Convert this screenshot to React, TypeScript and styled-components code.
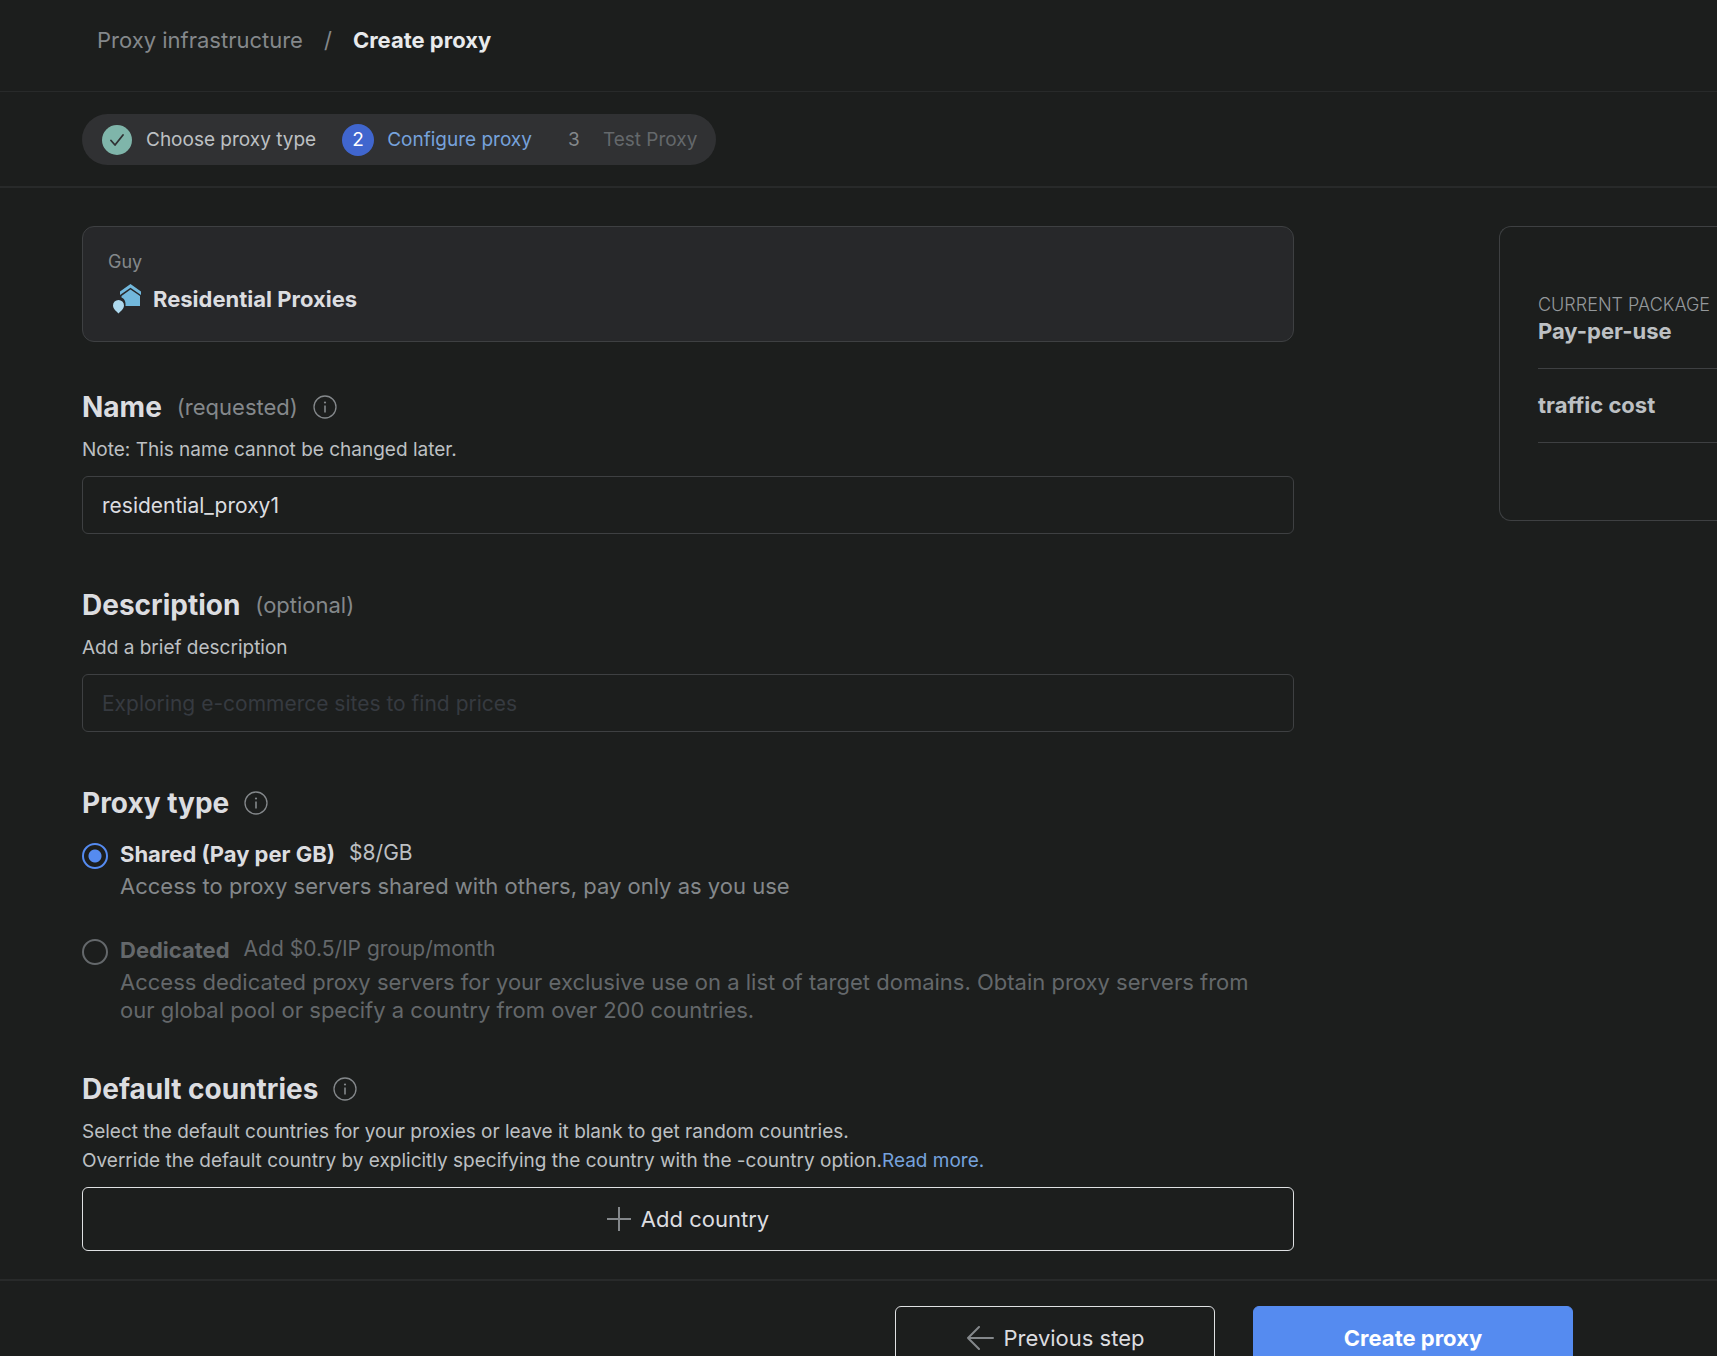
import React, { useState } from "react";
import styled, { createGlobalStyle } from "styled-components";

const color = {
  bg: "#1c1e1d",
  panel: "#27282a",
  pill: "#303133",
  divider: "#282a2a",
  border: "#3e4042",
  heading: "#dcdde0",
  text: "#bdc0c3",
  muted: "#84888b",
  dim: "#64686b",
  link: "#76a2dc",
  primary: "#558bf0",
};

const GlobalStyle = createGlobalStyle`
  *, *::before, *::after { box-sizing: border-box; }
  body {
    margin: 0;
    background: ${color.bg};
    color: ${color.text};
    font-family: Inter, "Liberation Sans", sans-serif;
    overflow-x: hidden;
  }
  h1, h2, p, ol, ul, fieldset { margin: 0; padding: 0; border: 0; }
  button, input { font-family: inherit; }
`;

const Header = styled.header`
  padding: 26px 97px 37px;
  border-bottom: 1px solid ${color.divider};
`;

const Crumbs = styled.nav`
  display: flex;
  gap: 21px;
  font-size: 22px;
  line-height: 28px;
  color: ${color.muted};
`;

const CrumbLink = styled.a`
  color: inherit;
  text-decoration: none;
`;

const CrumbCurrent = styled.span`
  font-weight: 700;
  color: #e8eaec;
`;

const StepsBar = styled.div`
  display: flex;
  padding: 22px 82px 21px;
  border-bottom: 2px solid ${color.divider};
`;

const Steps = styled.ol`
  display: flex;
  align-items: center;
  height: 51px;
  padding: 0 19px;
  gap: 26px;
  border-radius: 26px;
  background: ${color.pill};
  list-style: none;
`;

type StepState = "done" | "active" | "todo";

const stepText = { done: color.text, active: color.link, todo: color.dim };
const badgeBg = { done: "#7fb5aa", active: "#4066ce", todo: "transparent" };
const badgeText = { done: color.pill, active: "#ffffff", todo: color.muted };

const Step = styled.li<{ $state: StepState }>`
  display: flex;
  align-items: center;
  gap: 13px;
  font-size: 19px;
  line-height: 28px;
  color: ${(p) => stepText[p.$state]};
`;

const StepBadge = styled.span<{ $state: StepState }>`
  display: flex;
  align-items: center;
  justify-content: center;
  width: 32px;
  height: 32px;
  border: ${(p) => (p.$state === "done" ? 1 : 0)}px solid transparent;
  border-radius: 50%;
  background: ${(p) => badgeBg[p.$state]};
  background-clip: padding-box;
  color: ${(p) => badgeText[p.$state]};
`;

const Main = styled.main`
  display: flex;
  align-items: flex-start;
  gap: 205px;
  padding: 38px 0 28px 82px;
`;

const Form = styled.form`
  flex: 1;
  min-width: 0;
`;

const ProductCard = styled.section`
  height: 116px;
  padding: 21px 25px;
  border: 1px solid ${color.border};
  border-radius: 12px;
  background: ${color.panel};
`;

const ProductOwner = styled.p`
  font-size: 18px;
  line-height: 28px;
  color: ${color.muted};
`;

const ProductName = styled.h1`
  display: flex;
  align-items: center;
  gap: 12px;
  padding-top: 7px;
  font-size: 22px;
  font-weight: 700;
  line-height: 32px;
  color: ${color.heading};
`;

const HouseSvg = styled.svg`
  margin-left: 5px;
`;

const Section = styled.section<{ $gap?: number }>`
  padding-top: ${(p) => p.$gap ?? 53}px;
`;

const HeadingRow = styled.div`
  display: flex;
  align-items: center;
  gap: 15px;
`;

const Heading = styled.h2`
  font-size: 28px;
  font-weight: 700;
  line-height: 36px;
  color: ${color.heading};
`;

const Hint = styled.span`
  font-size: 22px;
  line-height: 36px;
  color: ${color.muted};
`;

const InfoButton = styled.button`
  display: flex;
  padding: 0;
  border: 0;
  background: none;
  color: ${color.muted};
`;

const Note = styled.p`
  padding: 10px 0 12px;
  font-size: 19px;
  line-height: 29px;
`;

const NoteLink = styled.a`
  color: ${color.link};
  text-decoration: none;
`;

const TextInput = styled.input`
  display: block;
  width: 100%;
  height: 58px;
  padding: 0 19px;
  border: 1px solid ${color.border};
  border-radius: 6px;
  outline: none;
  background: transparent;
  font-size: 21px;
  color: ${color.heading};
  &::placeholder {
    color: #363a40;
    opacity: 1;
  }
`;

const Options = styled.fieldset`
  display: grid;
  gap: 36px;
  padding-top: 19px;
`;

const Option = styled.label<{ $dim?: boolean }>`
  display: grid;
  grid-template-columns: 26px 1fr;
  column-gap: 12px;
  row-gap: 3px;
  font-size: 22px;
  line-height: 28px;
  color: ${(p) => (p.$dim ? color.dim : color.muted)};
`;

const Radio = styled.input`
  appearance: none;
  width: 26px;
  height: 26px;
  margin: 3px 0 0;
  border: 2px solid ${color.dim};
  border-radius: 50%;
  &:checked {
    border-color: ${color.primary};
    background: radial-gradient(circle, ${color.primary} 6px, transparent 7px);
  }
`;

const OptionTitle = styled.span`
  display: flex;
  gap: 14px;
`;

const OptionName = styled.strong<{ $dim?: boolean }>`
  font-weight: 700;
  color: ${(p) => (p.$dim ? color.dim : color.heading)};
`;

const OptionPrice = styled.span<{ $dim?: boolean }>`
  font-size: 21px;
  line-height: 26px;
  color: ${(p) => (p.$dim ? color.dim : color.text)};
`;

const OptionText = styled.span`
  grid-column: 2;
  padding-right: 24px;
`;

const Button = styled.button<{ $primary?: boolean; $wide?: boolean }>`
  display: flex;
  align-items: center;
  justify-content: center;
  gap: 10px;
  width: ${(p) => (p.$wide ? "100%" : "320px")};
  height: 64px;
  padding: 0;
  border: 1px solid ${(p) => (p.$primary ? color.primary : "#dfe1e3")};
  border-radius: 6px;
  background: ${(p) => (p.$primary ? color.primary : "transparent")};
  font-size: 22px;
  font-weight: ${(p) => (p.$primary ? 700 : 400)};
  color: ${(p) => (p.$primary ? "#ffffff" : color.heading)};
`;

const Summary = styled.aside`
  flex: none;
  width: 218px;
  padding: 66px 0 77px 38px;
  border: 1px solid ${color.border};
  border-right: 0;
  border-radius: 12px 0 0 12px;
  white-space: nowrap;
`;

const SummaryRow = styled.div`
  padding-bottom: 22px;
  border-bottom: 1px solid ${color.border};
  & + & {
    padding-top: 22px;
  }
`;

const SummaryLabel = styled.p`
  font-size: 18px;
  font-weight: 300;
  line-height: 24px;
  color: #94989b;
`;

const SummaryValue = styled.p`
  font-size: 22px;
  font-weight: 700;
  line-height: 29px;
`;

const Footer = styled.footer`
  display: flex;
  justify-content: flex-end;
  gap: 38px;
  padding: 25px 144px 25px 82px;
  border-top: 2px solid ${color.divider};
`;

const CheckIcon = () => (
  <svg width="14" height="12" viewBox="0 0 14 12" fill="none" stroke="currentColor" strokeWidth="1.800">
    <path d="M1 6.500l4 4.500L13 1" strokeLinecap="round" strokeLinejoin="round" />
  </svg>
);

const InfoIcon = () => (
  <svg width="24" height="24" viewBox="0 0 24 24" fill="none" stroke="currentColor" strokeWidth="1.300">
    <circle cx="12" cy="12" r="11" />
    <path d="M12 10.500v7" strokeWidth="1.600" />
    <circle cx="12" cy="7.500" r="1.100" fill="currentColor" stroke="none" />
  </svg>
);

const HouseIcon = () => (
  <HouseSvg width="28" height="30" viewBox="0 0 28 30">
    <path fill="#72b8dc" d="M17.500 0L28 7.500V11L17.500 3.800 7 11V7.500z" />
    <path fill="#72b8dc" d="M17.500 5.500L27 12v10H12.500C13 17 11 14.500 8.500 13.500V12z" />
    <path fill="#aed9ee" d="M5.500 16A5.500 5.500 0 0 1 11 21.500C11 24.500 8 27 5.500 29.500 3 27 0 24.500 0 21.500A5.500 5.500 0 0 1 5.500 16z" />
  </HouseSvg>
);

const PlusIcon = () => (
  <svg width="24" height="24" viewBox="0 0 24 24" stroke={color.muted} strokeWidth="2">
    <path d="M12 0v24M0 12h24" />
  </svg>
);

const BackIcon = () => (
  <svg width="28" height="24" viewBox="0 0 28 24" fill="none" stroke={color.muted} strokeWidth="2">
    <path d="M13 1L2 12l11 11M2 12h25" strokeLinecap="round" strokeLinejoin="round" />
  </svg>
);

const Info = ({ about }: { about: string }) => (
  <InfoButton type="button" aria-label={about}>
    <InfoIcon />
  </InfoButton>
);

const steps: { label: string; state: StepState }[] = [
  { label: "Choose proxy type", state: "done" },
  { label: "Configure proxy", state: "active" },
  { label: "Test Proxy", state: "todo" },
];

const proxyTypes = [
  {
    id: "shared",
    name: "Shared (Pay per GB)",
    price: "$8/GB",
    text: "Access to proxy servers shared with others, pay only as you use",
    dim: false,
  },
  {
    id: "dedicated",
    name: "Dedicated",
    price: "Add $0.5/IP group/month",
    text: "Access dedicated proxy servers for your exclusive use on a list of target domains. Obtain proxy servers from our global pool or specify a country from over 200 countries.",
    dim: true,
  },
];

export default function App() {
  const [name, setName] = useState("residential_proxy1");
  const [description, setDescription] = useState("");
  const [type, setType] = useState("shared");

  return (
    <>
      <GlobalStyle />
      <Header>
        <Crumbs>
          <CrumbLink href="#proxies">Proxy infrastructure</CrumbLink>
          <span>/</span>
          <CrumbCurrent>Create proxy</CrumbCurrent>
        </Crumbs>
      </Header>
      <StepsBar>
        <Steps>
          {steps.map((s, i) => (
            <Step key={s.label} $state={s.state}>
              <StepBadge $state={s.state}>{s.state === "done" ? <CheckIcon /> : i + 1}</StepBadge>
              {s.label}
            </Step>
          ))}
        </Steps>
      </StepsBar>
      <Main>
        <Form id="proxy-form" onSubmit={(e) => e.preventDefault()}>
          <ProductCard>
            <ProductOwner>Guy</ProductOwner>
            <ProductName>
              <HouseIcon />
              Residential Proxies
            </ProductName>
          </ProductCard>

          <Section $gap={47}>
            <HeadingRow>
              <Heading>
                <label htmlFor="name">Name</label>
              </Heading>
              <Hint>(requested)</Hint>
              <Info about="About the name" />
            </HeadingRow>
            <Note>Note: This name cannot be changed later.</Note>
            <TextInput id="name" value={name} onChange={(e) => setName(e.target.value)} />
          </Section>

          <Section>
            <HeadingRow>
              <Heading>
                <label htmlFor="description">Description</label>
              </Heading>
              <Hint>(optional)</Hint>
            </HeadingRow>
            <Note>Add a brief description</Note>
            <TextInput
              id="description"
              placeholder="Exploring e-commerce sites to find prices"
              value={description}
              onChange={(e) => setDescription(e.target.value)}
            />
          </Section>

          <Section>
            <HeadingRow>
              <Heading id="type-heading">Proxy type</Heading>
              <Info about="About proxy types" />
            </HeadingRow>
            <Options aria-labelledby="type-heading">
              {proxyTypes.map((t) => (
                <Option key={t.id} htmlFor={t.id} $dim={t.dim}>
                  <Radio
                    type="radio"
                    name="type"
                    id={t.id}
                    checked={type === t.id}
                    onChange={() => setType(t.id)}
                  />
                  <OptionTitle>
                    <OptionName $dim={t.dim}>{t.name}</OptionName>
                    <OptionPrice $dim={t.dim}>{t.price}</OptionPrice>
                  </OptionTitle>
                  <OptionText>{t.text}</OptionText>
                </Option>
              ))}
            </Options>
          </Section>

          <Section $gap={47}>
            <HeadingRow>
              <Heading>Default countries</Heading>
              <Info about="About default countries" />
            </HeadingRow>
            <Note>
              Select the default countries for your proxies or leave it blank to get random countries.
              <br />
              Override the default country by explicitly specifying the country with the -country option.
              <NoteLink href="#country">Read more.</NoteLink>
            </Note>
            <Button type="button" $wide>
              <PlusIcon />
              Add country
            </Button>
          </Section>
        </Form>
        <Summary>
          <SummaryRow>
            <SummaryLabel>CURRENT PACKAGE</SummaryLabel>
            <SummaryValue>Pay-per-use</SummaryValue>
          </SummaryRow>
          <SummaryRow>
            <SummaryValue>traffic cost</SummaryValue>
          </SummaryRow>
        </Summary>
      </Main>
      <Footer>
        <Button type="button">
          <BackIcon />
          Previous step
        </Button>
        <Button type="submit" form="proxy-form" $primary>
          Create proxy
        </Button>
      </Footer>
    </>
  );
}
